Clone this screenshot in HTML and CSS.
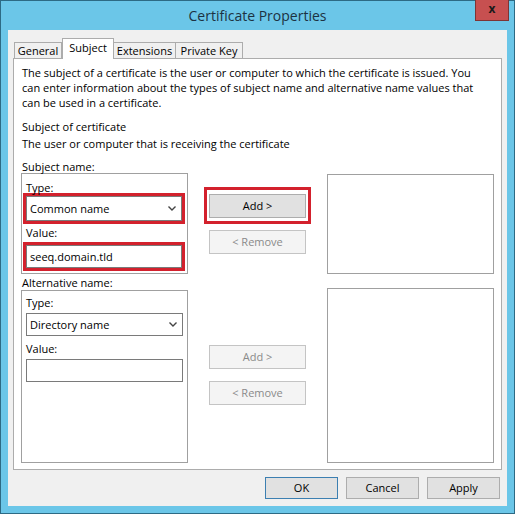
FILE: index.html
```html
<!DOCTYPE html>
<html lang="en">
<head>
  <meta charset="UTF-8" />
  <title>Certificate Properties</title>
  <link rel="stylesheet" href="styles.css">
</head>
<body>
  <div class="window">
    <div class="titlebar">
      <span class="title">Certificate Properties</span>
      <div class="close">x</div>
    </div>
    <div class="client">
      <div class="tabs">
        <div class="tab tab-general">General</div>
        <div class="tab tab-subject active">Subject</div>
        <div class="tab tab-ext">Extensions</div>
        <div class="tab tab-key">Private Key</div>
      </div>
      <div class="panel">
        <p class="intro">The subject of a certificate is the user or computer to which the certificate is issued. You<br>can enter information about the types of subject name and alternative name values that<br>can be used in a certificate.</p>
        <p class="heading">Subject of certificate</p>
        <p class="desc">The user or computer that is receiving the certificate</p>

        <div class="name-row row-subject">
          <div class="col-left">
            <div class="group-label">Subject name:</div>
            <div class="group group-subject">
              <span class="field-label">Type:</span>
              <div class="hl hl-type">
                <div class="select">Common name
                  <svg class="chevron" width="8" height="5" viewBox="0 0 8 5"><path d="M0.5 0.5 L4 4 L7.5 0.5" fill="none" stroke="#444" stroke-width="1.4"/></svg>
                </div>
              </div>
              <span class="field-label label-value">Value:</span>
              <div class="hl hl-value">
                <div class="input">seeq.domain.tld</div>
              </div>
            </div>
          </div>
          <div class="col-mid">
            <div class="hl-btn"><div class="btn">Add &gt;</div></div>
            <div class="btn disabled btn-remove">&lt; Remove</div>
          </div>
          <div class="list list-subject"></div>
        </div>

        <div class="name-row row-alt">
          <div class="col-left">
            <div class="group-label label-alt">Alternative name:</div>
            <div class="group group-alt">
              <span class="field-label">Type:</span>
              <div class="select select-alt">Directory name
                <svg class="chevron" width="8" height="5" viewBox="0 0 8 5"><path d="M0.5 0.5 L4 4 L7.5 0.5" fill="none" stroke="#444" stroke-width="1.4"/></svg>
              </div>
              <span class="field-label label-alt-value">Value:</span>
              <div class="input input-alt"></div>
            </div>
          </div>
          <div class="col-mid col-mid-alt">
            <div class="btn disabled">Add &gt;</div>
            <div class="btn disabled btn-remove-alt">&lt; Remove</div>
          </div>
          <div class="list list-alt"></div>
        </div>
      </div>
      <div class="footer">
        <div class="btn btn-footer btn-default">OK</div>
        <div class="btn btn-footer">Cancel</div>
        <div class="btn btn-footer">Apply</div>
      </div>
    </div>
  </div>
</body>
</html>
```

FILE: styles.css
```css
:root {
  --frame: #6bc6e8;
  --frame-edge: #2d6a84;
  --client: #f0f0f0;
  --line: #acacac;
  --control: #7a7a7a;
  --mark: #d3212d;
}
* { margin: 0; padding: 0; box-sizing: border-box; }
body {
  font-family: 'Open Sans', 'Noto Sans', sans-serif;
  font-size: 11px;
  color: #000;
  background: var(--frame);
}
.window {
  width: 515px;
  height: 514px;
  background: var(--frame);
  border: 1px solid var(--frame-edge);
  padding: 0 7px 7px;
  display: flex;
  flex-direction: column;
}
.titlebar {
  height: 29px;
  margin: 0 -7px;
  position: relative;
  display: flex;
  align-items: center;
  justify-content: center;
}
.title { font-size: 14px; color: #1c3242; }
.close {
  position: absolute;
  top: -1px;
  right: 5px;
  width: 34px;
  height: 21px;
  background: #c75050;
  border: 1px solid #7e3434;
  border-top: none;
  color: #1a1a1a;
  font-weight: 700;
  font-size: 12px;
  text-align: center;
  line-height: 18px;
}
.client {
  flex: 1;
  background: var(--client);
  padding: 8px 5px 7px;
  display: flex;
  flex-direction: column;
}

/* tabs */
.tabs { display: flex; align-items: flex-end; height: 20px; padding-left: 1px; }
.tab {
  height: 16px;
  border: 1px solid var(--line);
  border-bottom: none;
  background: #f0f0f0;
  text-align: center;
  line-height: 15px;
}
.tab-general { width: 48px; }
.tab-subject { width: 52px; }
.tab-ext { width: 63px; margin-left: -1px; }
.tab-key { width: 68px; margin-left: -1px; }
.tab.active {
  height: 21px;
  margin-bottom: -1px;
  padding-top: 1px;
  background: #fff;
  position: relative;
  z-index: 1;
}
.panel {
  height: 412px;
  background: #fff;
  border: 1px solid var(--line);
  padding: 6px 0 0 7px;
}
.panel p { line-height: 15px; margin-left: 1px; }
.heading { margin-top: 9px; }
.desc { margin-top: 2px; }

/* name rows */
.name-row { display: flex; gap: 21px; align-items: flex-start; }
.row-subject { margin-top: 9px; }
.row-alt { margin-top: 1px; }
.col-left { width: 167px; }
.col-mid { width: 97px; }
.group-label { line-height: 13px; margin-left: 1px; }
.label-alt { line-height: 15px; }
.group { border: 1px solid #a0a0a0; padding: 0 4px; }
.group-subject { height: 101px; padding-top: 7px; }
.group-alt { height: 173px; padding-top: 5px; }
.field-label { display: block; line-height: 13px; }
.label-value { margin-top: 2px; }
.label-alt-value { margin-top: 6px; }

.select, .input {
  width: 157px;
  height: 23px;
  border: 1px solid var(--control);
  background: #fff;
  padding: 0 5px 0 3px;
  display: flex;
  align-items: center;
  justify-content: space-between;
  line-height: 15px;
}
.select-alt { margin-top: 4px; }
.input-alt { margin-top: 4px; }
.hl { border: 3px solid var(--mark); margin-left: -3px; width: 162px; }
.hl .select, .hl .input { width: 156px; }
.hl-type { margin-top: -1px; }
.hl-type .select { height: 25px; }
.hl-value { margin-top: 3px; }

.list { width: 167px; border: 1px solid #a0a0a0; background: #fff; }
.list-subject { margin-top: 14px; height: 100px; }
.list-alt { margin-top: 13px; height: 175px; }

/* buttons */
.btn {
  height: 24px;
  border: 1px solid #adadad;
  background: #e1e1e1;
  text-align: center;
  line-height: 21px;
}
.btn.disabled { background: #f4f4f4; border-color: #c4c4c4; color: #8a8a8a; }
.hl-btn {
  margin: 27px -5px 0;
  border: 3px solid var(--mark);
  padding: 4px 2px 3px;
}
.btn-remove { margin-top: 6px; }
.col-mid-alt { margin-top: 70px; }
.btn-remove-alt { margin-top: 12px; }

.footer {
  margin-top: 7px;
  padding-right: 2px;
  display: flex;
  justify-content: flex-end;
  gap: 8px;
}
.btn-footer { width: 73px; height: 22px; line-height: 19px; }
.btn-default { border-color: #3c7fb1; }
```
